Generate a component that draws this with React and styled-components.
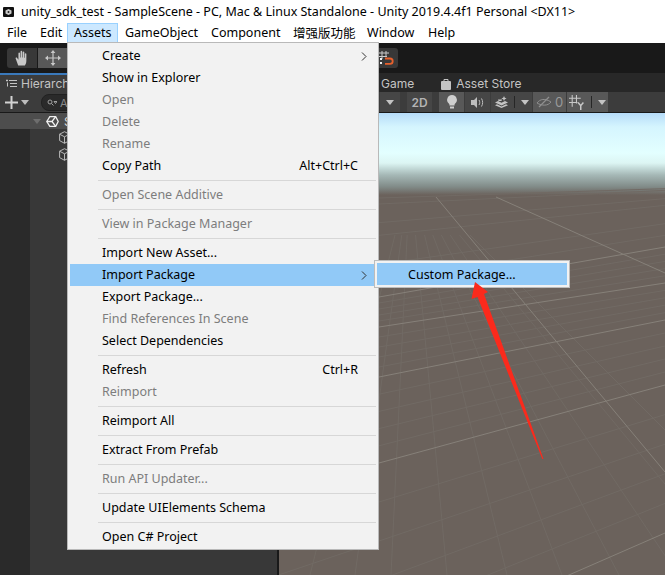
import React from 'react';
import styled, { createGlobalStyle } from 'styled-components';

const GlobalStyle = createGlobalStyle`
  html, body { margin: 0; padding: 0; background: #fff; }
  body { font-family: "Noto Sans", "Noto Sans CJK SC", sans-serif; }
`;

const Page = styled.div`
  position: relative;
  width: 665px;
  height: 575px;
  overflow: hidden;
  display: flex;
  flex-direction: column;
  background: #fff;
  font-size: 12px;
  color: #000;
`;

const TitleBar = styled.div`
  height: 23px;
  flex: none;
  display: flex;
  align-items: center;
  gap: 7px;
  padding-left: 3px;
  font-size: 12.5px;
  white-space: nowrap;
`;

const MenuBar = styled.div`
  height: 20px;
  flex: none;
  display: flex;
  font-size: 12.5px;
  white-space: nowrap;
`;

const MenuBarItem = styled.div`
  display: flex;
  align-items: center;
  padding: 0 6px 1px 6px;
  border: 1px solid ${p => (p.$open ? '#99d1ff' : 'transparent')};
  background: ${p => (p.$open ? '#cce8ff' : 'transparent')};
  width: ${p => p.$w}px;
  box-sizing: border-box;
`;

const Editor = styled.div`
  flex: 1;
  display: flex;
  flex-direction: column;
  min-height: 0;
  font-family: Inter, "Noto Sans", sans-serif;
`;

const MainToolbar = styled.div`
  height: 30px;
  flex: none;
  background: #191919;
  display: flex;
  align-items: center;
  padding-left: 7px;
  gap: 1px;
`;

const ToolButton = styled.div`
  width: 30px;
  height: 20px;
  display: flex;
  align-items: center;
  justify-content: center;
  background: ${p => (p.$on ? '#585858' : '#383838')};
  border-radius: ${p => (p.$first ? '3px 0 0 3px' : '0')};
`;

const SnapButton = styled.div`
  width: 30px;
  height: 20px;
  margin-left: 299px;
  display: flex;
  align-items: center;
  justify-content: flex-end;
  padding-right: 3px;
  box-sizing: border-box;
  background: #383838;
  border-radius: 0 3px 3px 0;
`;

const Panes = styled.div`
  flex: 1;
  display: flex;
  min-height: 0;
`;

const HierarchyPane = styled.div`
  width: 279px;
  flex: none;
  display: flex;
  flex-direction: column;
  border-right: 2px solid #191919;
  box-sizing: border-box;
  background: #383838;
`;

const ScenePane = styled.div`
  flex: 1;
  display: flex;
  flex-direction: column;
  min-width: 0;
`;

const TabRow = styled.div`
  height: 19px;
  flex: none;
  box-sizing: border-box;
  background: #282828;
  display: flex;
  align-items: center;
  color: #c4c4c4;
  font-size: 12px;
  white-space: nowrap;
`;

const HierarchyTab = styled.div`
  height: 19px;
  width: 110px;
  box-sizing: border-box;
  border-top: 2px solid #3a79bb;
  background: #3c3c3c;
  display: flex;
  align-items: center;
  gap: 4px;
  padding-left: 6px;
`;

const SceneTabs = styled.div`
  display: flex;
  align-items: center;
  padding: 2px 0 0 102px;
`;

const StoreTab = styled.div`
  display: flex;
  align-items: center;
  gap: 5px;
  margin-left: 27px;
`;

const ToolRow = styled.div`
  height: 21px;
  flex: none;
  box-sizing: border-box;
  background: #3c3c3c;
  border-bottom: 1px solid #191919;
  display: flex;
  align-items: stretch;
`;

const SearchPill = styled.div`
  width: 120px;
  height: 15px;
  margin: 2px 0 0 12px;
  border-radius: 8px;
  background: #2a2a2a;
  border: 1px solid #212121;
  display: flex;
  align-items: center;
  gap: 3px;
  padding-left: 5px;
  color: #8a8a8a;
  font-size: 11px;
`;

const AddGroup = styled.div`
  display: flex;
  align-items: center;
  gap: 3px;
  padding-left: 5px;
`;

const SceneTools = styled.div`
  display: flex;
  align-items: stretch;
  padding-left: 100px;
`;

const ViewButton = styled.div`
  width: ${p => p.$w}px;
  margin-left: ${p => p.$gap || 1}px;
  background: ${p => (p.$on ? '#585858' : '#464646')};
  display: flex;
  align-items: center;
  justify-content: center;
  gap: 3px;
  color: #b4b4b4;
  font-size: 12px;
  font-weight: 600;
`;

const HiddenCount = styled.span`
  color: #9a9a9a;
  font-size: 13px;
  font-weight: 400;
`;

const ViewDivider = styled.div`
  width: 1px;
  height: 12px;
  background: #262626;
  margin: 0 3px;
`;

const Tree = styled.div`
  flex: 1;
  display: flex;
  flex-direction: column;
  background: linear-gradient(to right, #2a2a2a 30px, #383838 30px);
`;

const SceneRow = styled.div`
  height: 16px;
  flex: none;
  background: #4d4d4d;
  display: flex;
  align-items: center;
  padding-left: 33px;
  gap: 5px;
`;

const SceneName = styled.span`
  color: #ddd;
`;

const ObjectRow = styled.div`
  height: 17px;
  flex: none;
  display: flex;
  align-items: center;
  padding-left: 59px;
`;

const Viewport = styled.div`
  flex: 1;
  min-height: 0;
  background: linear-gradient(
    to bottom,
    #b6dcf9 0,
    #d5f5fe 14px,
    #e3ffff 40px,
    #dcf5f3 50px,
    #a5b8b6 62px,
    #808a87 74px,
    #6b625c 82px
  );
`;

const GridSvg = styled.svg`
  display: block;
  width: 100%;
  height: 100%;
`;

const Menu = styled.div`
  position: absolute;
  left: 67px;
  top: 42px;
  width: 312px;
  height: 508px;
  box-sizing: border-box;
  background: #f2f2f2;
  border: 1px solid #b9b9b9;
  padding-top: 2px;
  font-size: 12.5px;
  white-space: nowrap;
`;

const MenuRow = styled.div`
  position: relative;
  height: 22px;
  box-sizing: border-box;
  margin: 0 2px;
  padding: 0 18px 1px 32px;
  display: flex;
  align-items: center;
  justify-content: space-between;
  color: ${p => (p.$off ? '#7d7d7d' : '#000')};
  background: ${p => (p.$active ? '#91c9f7' : 'transparent')};
`;

const MenuRule = styled.div`
  height: 1px;
  margin: 3px 2px 3px 30px;
  background: #d7d7d7;
`;

const Chevron = styled.svg`
  position: absolute;
  right: 9px;
  top: 7px;
  width: 6px;
  height: 9px;
`;

const SubMenu = styled.div`
  position: absolute;
  left: 304px;
  top: -4px;
  width: 196px;
  height: 28px;
  box-sizing: border-box;
  background: #91c9f7;
  border: 1px solid #bcbcbc;
  outline: 2px solid #f2f2f2;
  outline-offset: -3px;
  display: flex;
  align-items: center;
  padding-left: 33px;
  color: #000;
`;

const RedArrow = styled.svg`
  position: absolute;
  left: 465px;
  top: 278px;
  width: 85px;
  height: 185px;
`;

const UnityMark = () => (
  <svg width="13" height="13" viewBox="0 0 13 13" fill="none" stroke="#f0f0f0" strokeWidth="1.300">
    <path d="M.8 6.500 3.800 1.700H9.700L12.200 6.500 9.700 11.300H3.800Z" />
    <path d="M.8 6.500H6L9.700 1.700M6 6.500 9.700 11.300" />
  </svg>
);

const TitleIcon = () => (
  <svg width="11" height="10" viewBox="0 0 11 10">
    <rect width="11" height="10" rx="1" fill="#111" />
    <path d="M5.500 2 8.500 3.500V6.500L5.500 8 2.500 6.500V3.500Z" fill="#ccc" />
    <circle cx="5.500" cy="5" r="1" fill="#222" />
  </svg>
);

const Cube = () => (
  <svg width="11" height="13" viewBox="0 0 11 13" fill="none" stroke="#b9b9b9" strokeWidth="1">
    <path d="M5.500.7 10.400 3.200V9.600L5.500 12.300.6 9.600V3.200Z" />
    <path d="M.6 3.200 5.500 5.800 10.400 3.200M5.500 5.800V12.300" />
  </svg>
);

const HandIcon = () => (
  <svg width="15" height="17" viewBox="0 0 14 15" fill="#c8c8c8">
    <path d="M3 14 .6 7.600c-.3-.9.9-1.400 1.400-.6L3.200 8.600V2.600c0-1 1.400-1 1.500 0V6.500h.5V1c0-1 1.500-1 1.500 0v5.500h.5V1.800c0-1 1.500-1 1.500 0v5h.5V3.400c0-1 1.400-1 1.400 0v6.200c0 2-.6 3.200-1.400 4.400Z" />
  </svg>
);

const MoveIcon = () => (
  <svg width="16" height="16" viewBox="0 0 16 16" fill="#c8c8c8">
    <path d="M8 0 10.400 3H5.600ZM8 16 5.600 13h4.800ZM0 8 3 5.600v4.800ZM16 8 13 10.400V5.600Z" />
    <path d="M8 3v10M3 8h10" stroke="#c8c8c8" strokeWidth="1.200" />
  </svg>
);

const SnapIcon = () => (
  <svg width="16" height="16" viewBox="0 0 16 16" fill="none">
    <path d="M3 1v8M7 1v5M0 3h10M0 6.500h8" stroke="#c8c8c8" />
    <path d="M6 8.500h5a2.700 2.700 0 0 1 0 5.400H6" stroke="#e8602c" strokeWidth="1.800" />
    <path d="M1 9h2M1 13h2" stroke="#eee" strokeWidth="2" />
  </svg>
);

const ListIcon = () => (
  <svg width="11" height="9" viewBox="0 0 11 9" stroke="#c4c4c4" strokeWidth="1">
    <path d="M3 1.500h8M4 4.500h7M4 7.500h7M1 .5v2M0 1.500h2M1.500 3.500v4" fill="none" />
  </svg>
);

const Caret = ({ color = '#bdbdbd', w = 8 }) => (
  <svg width={w} height="5" viewBox="0 0 8 5">
    <path d="M0 0h8L4 5Z" fill={color} />
  </svg>
);

const PlusIcon = () => (
  <svg width="13" height="13" viewBox="0 0 13 13">
    <path d="M6.500 0v13M0 6.500h13" stroke="#d2d2d2" strokeWidth="2" />
  </svg>
);

const SearchIcon = () => (
  <svg width="10" height="8" viewBox="0 0 10 8" fill="none" stroke="#a0a0a0">
    <circle cx="3" cy="3" r="2" />
    <path d="M4.500 4.500 6.500 6.500M7 2.500h3L8.500 4.500Z" />
  </svg>
);

const BagIcon = () => (
  <svg width="10" height="12" viewBox="0 0 10 12">
    <path d="M3 3V1.500h4V3" fill="none" stroke="#c4c4c4" />
    <rect y="3" width="10" height="9" rx="1" fill="#c4c4c4" />
  </svg>
);

const BulbIcon = () => (
  <svg width="10" height="14" viewBox="0 0 10 14" fill="#cfcfcf">
    <path d="M5 0a5 5 0 0 1 2.600 9.200V10.500H2.400V9.200A5 5 0 0 1 5 0Z" />
    <rect x="3" y="11.500" width="4" height="2" />
  </svg>
);

const AudioIcon = () => (
  <svg width="13" height="11" viewBox="0 0 13 11" fill="#bdbdbd">
    <path d="M0 3h3l3-3v11L3 8H0Z" />
    <path d="M8 3c1 1.500 1 3.500 0 5M10.500 1.500c1.500 2.500 1.500 5.500 0 8" fill="none" stroke="#bdbdbd" />
  </svg>
);

const LayersIcon = () => (
  <svg width="13" height="12" viewBox="0 0 13 12" fill="#c4c4c4">
    <path d="M0 6.500 3 5l3.500 1.800L10 5l3 1.500-6.500 3Z" />
    <path d="M0 9.200 2 8.200l4.500 2.200L11 8.200l2 1-6.500 2.800Z" />
    <path d="M9 0l.8 1.800 1.800.7-1.800.7L9 5l-.8-1.800-1.800-.7 1.800-.7ZM3 3.500h4L6.500 5H3.500Z" />
  </svg>
);

const HiddenIcon = () => (
  <svg width="16" height="12" viewBox="0 0 16 12" fill="none" stroke="#8f8f8f">
    <path d="M1 7c3-4 8-5 14-1-3 4-9 4-14 1Z" />
    <path d="M3 11 13 1" strokeWidth="1.200" />
  </svg>
);

const GizmoIcon = () => (
  <svg width="16" height="15" viewBox="0 0 15 14" fill="none" stroke="#c8c8c8">
    <path d="M3 0v11M7 0v8M0 3h11M0 7h8" />
    <path d="M8.500 7 11 10l2.500-3M11 10v4" strokeWidth="1.400" />
  </svg>
);

const ITEMS = [
  { label: 'Create', arrow: true },
  { label: 'Show in Explorer' },
  { label: 'Open', off: true },
  { label: 'Delete', off: true },
  { label: 'Rename', off: true },
  { label: 'Copy Path', key: 'Alt+Ctrl+C' },
  { rule: true },
  { label: 'Open Scene Additive', off: true },
  { rule: true },
  { label: 'View in Package Manager', off: true },
  { rule: true },
  { label: 'Import New Asset...' },
  { label: 'Import Package', arrow: true, active: true },
  { label: 'Export Package...' },
  { label: 'Find References In Scene', off: true },
  { label: 'Select Dependencies' },
  { rule: true },
  { label: 'Refresh', key: 'Ctrl+R' },
  { label: 'Reimport', off: true },
  { rule: true },
  { label: 'Reimport All' },
  { rule: true },
  { label: 'Extract From Prefab' },
  { rule: true },
  { label: 'Run API Updater...', off: true },
  { rule: true },
  { label: 'Update UIElements Schema' },
  { rule: true },
  { label: 'Open C# Project' }
];

const TOP_MENUS = [
  ['File', 33],
  ['Edit', 34],
  ['Assets', 51],
  ['GameObject', 86],
  ['Component', 82],
  ['增强版功能', 74],
  ['Window', 61],
  ['Help', 40]
];

// left/right y of the heavy ground lines, the light ones are spread between them
const MAJOR = [[192, 187], [210, 192], [248, 212], [297, 247], [327, 283], [377, 320], [463, 385], [658, 533]];
const MINOR_X = [310, 355, 391, 447, 507, 562, 619, 678, 740, 810];
const VANISH = { x: 410, y: 175 };
const FAN_START = 0.15;

const yAt = (l, r, x) => l + ((r - l) * (x - 379)) / 286;

const GroundGrid = () => {
  const minor = [];
  MAJOR.slice(0, -1).forEach(([l, r], i) => {
    const [nl, nr] = MAJOR[i + 1];
    const steps = i < 3 ? 3 : 5;
    for (let s = 1; s < steps; s++) {
      minor.push([l + ((nl - l) * s) / steps, r + ((nr - r) * s) / steps]);
    }
  });
  return (
    <GridSvg viewBox="279 113 386 462" preserveAspectRatio="none">
      <g stroke="#716a64" strokeWidth="1" fill="none">
        {minor.map(([l, r], i) => (
          <line key={i} x1="279" y1={yAt(l, r, 279)} x2="665" y2={yAt(l, r, 665)} />
        ))}
        {MINOR_X.map(x => (
          <line
            key={x}
            x1={VANISH.x + (x - VANISH.x) * FAN_START}
            y1={VANISH.y + (575 - VANISH.y) * FAN_START}
            x2={x}
            y2="575"
          />
        ))}
      </g>
      <g stroke="#868079" strokeWidth="1" fill="none">
        {MAJOR.slice(3).map(([l, r]) => (
          <line key={l} x1="279" y1={yAt(l, r, 279)} x2="665" y2={yAt(l, r, 665)} />
        ))}
        <line x1="436" y1="197" x2="665" y2="472" />
        <line x1="496" y1="197" x2="665" y2="273" />
      </g>
    </GridSvg>
  );
};

export default function App() {
  return (
    <Page>
      <GlobalStyle />
      <TitleBar>
        <TitleIcon />
        unity_sdk_test - SampleScene - PC, Mac &amp; Linux Standalone - Unity 2019.4.4f1 Personal &lt;DX11&gt;
      </TitleBar>
      <MenuBar>
        {TOP_MENUS.map(([name, w]) => (
          <MenuBarItem key={name} $w={w} $open={name === 'Assets'}>{name}</MenuBarItem>
        ))}
      </MenuBar>
      <Editor>
        <MainToolbar>
          <ToolButton $first><HandIcon /></ToolButton>
          <ToolButton $on><MoveIcon /></ToolButton>
          <SnapButton><SnapIcon /></SnapButton>
        </MainToolbar>
        <Panes>
          <HierarchyPane>
            <TabRow>
              <HierarchyTab><ListIcon />Hierarchy</HierarchyTab>
            </TabRow>
            <ToolRow>
              <AddGroup><PlusIcon /><Caret /></AddGroup>
              <SearchPill><SearchIcon />All</SearchPill>
            </ToolRow>
            <Tree>
              <SceneRow>
                <Caret color="#6e6e6e" />
                <UnityMark />
                <SceneName>SampleScene</SceneName>
              </SceneRow>
              <ObjectRow><Cube /></ObjectRow>
              <ObjectRow><Cube /></ObjectRow>
            </Tree>
          </HierarchyPane>
          <ScenePane>
            <TabRow>
              <SceneTabs>
                Game
                <StoreTab><BagIcon />Asset Store</StoreTab>
              </SceneTabs>
            </TabRow>
            <ToolRow>
              <SceneTools>
                <ViewButton $w={20} $gap={1}><Caret color="#c4c4c4" /></ViewButton>
                <ViewButton $w={25} $gap={7}>2D</ViewButton>
                <ViewButton $w={25} $gap={7} $on><BulbIcon /></ViewButton>
                <ViewButton $w={25}><AudioIcon /></ViewButton>
                <ViewButton $w={41}><LayersIcon /><ViewDivider /><Caret color="#c4c4c4" /></ViewButton>
                <ViewButton $w={33} $on><HiddenIcon /><HiddenCount>0</HiddenCount></ViewButton>
                <ViewButton $w={41} $on><GizmoIcon /><ViewDivider /><Caret color="#c4c4c4" /></ViewButton>
              </SceneTools>
            </ToolRow>
            <Viewport><GroundGrid /></Viewport>
          </ScenePane>
        </Panes>
      </Editor>
      <Menu>
        {ITEMS.map((item, i) =>
          item.rule ? (
            <MenuRule key={i} />
          ) : (
            <MenuRow key={i} $off={item.off} $active={item.active}>
              <span>{item.label}</span>
              {item.key && <span>{item.key}</span>}
              {item.arrow && (
                <Chevron viewBox="0 0 6 9" fill="none" stroke="#333" strokeWidth="1">
                  <path d="M1 .5 5 4.500 1 8.500" />
                </Chevron>
              )}
              {item.active && <SubMenu>Custom Package...</SubMenu>}
            </MenuRow>
          )
        )}
      </Menu>
      <RedArrow viewBox="465 278 85 185">
        <path d="M475 282 488 292 484 294 543.500 459 542.300 459 477.500 297 471.500 299Z" fill="#fb2a1c" />
      </RedArrow>
    </Page>
  );
}
